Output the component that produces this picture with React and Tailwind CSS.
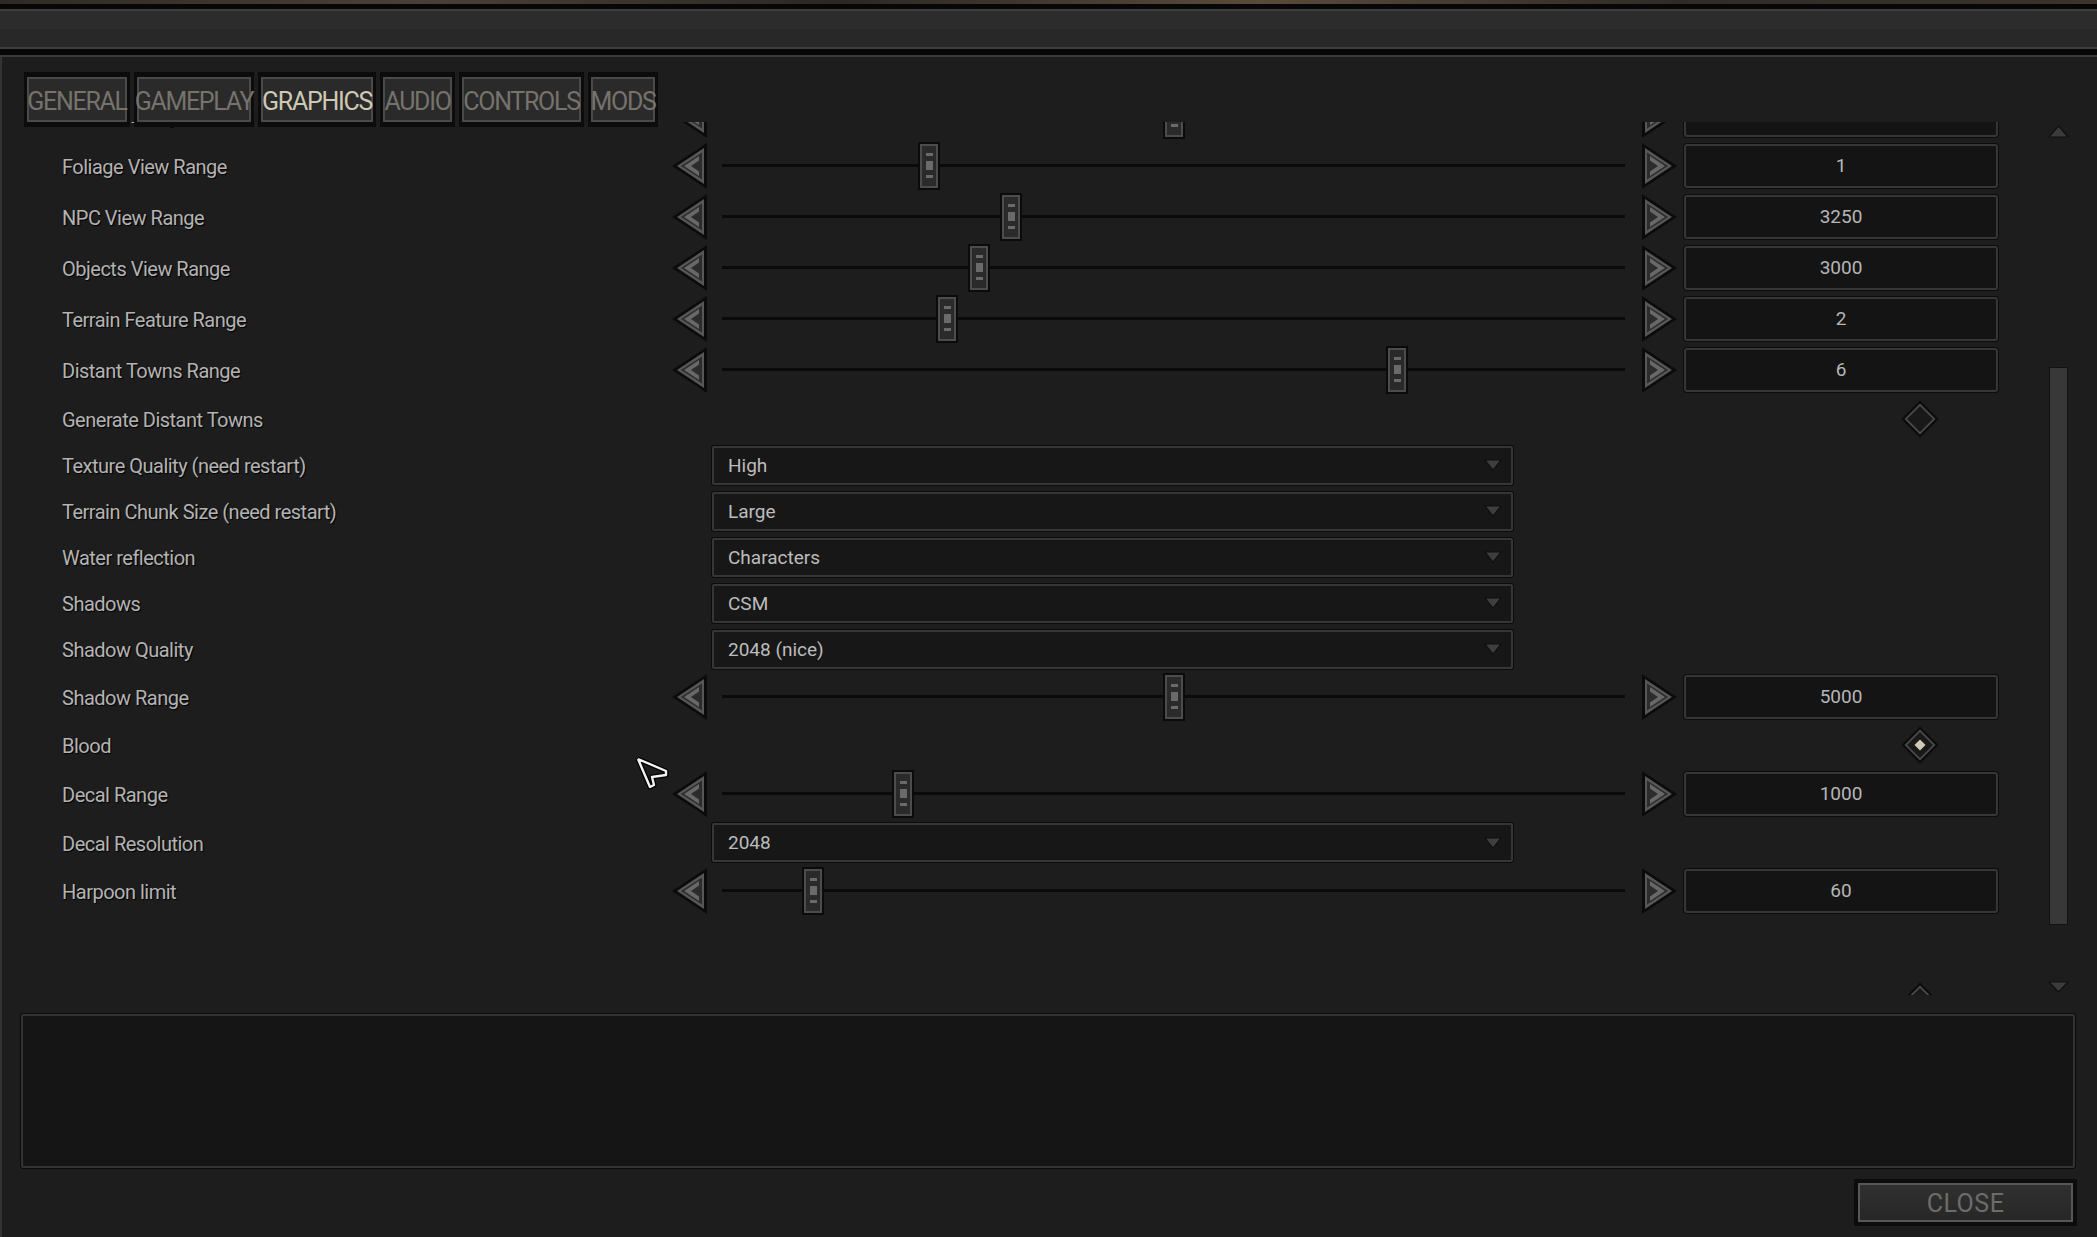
import React from 'react';

const font = { fontFamily: 'Roboto, "Liberation Sans", sans-serif' };

const tabs = [
    { name: 'GENERAL', w: 'w-[106px]' },
    { name: 'GAMEPLAY', w: 'w-[120px]' },
    { name: 'GRAPHICS', w: 'w-[118px]', active: true },
    { name: 'AUDIO', w: 'w-[75px]' },
    { name: 'CONTROLS', w: 'w-[125px]' },
    { name: 'MODS', w: 'w-[70px]' },
];

const rows = [
    { type: 'slider', label: 'Grass Density', value: '2', pos: 0.5, h: 'h-[51px]' },
    { type: 'slider', label: 'Foliage View Range', value: '1', pos: 0.222, h: 'h-[51px]' },
    { type: 'slider', label: 'NPC View Range', value: '3250', pos: 0.316, h: 'h-[51px]' },
    { type: 'slider', label: 'Objects View Range', value: '3000', pos: 0.279, h: 'h-[51px]' },
    { type: 'slider', label: 'Terrain Feature Range', value: '2', pos: 0.243, h: 'h-[51px]' },
    { type: 'slider', label: 'Distant Towns Range', value: '6', pos: 0.754, h: 'h-[51px]' },
    { type: 'check', label: 'Generate Distant Towns', checked: false, h: 'h-[47px]' },
    { type: 'select', label: 'Texture Quality (need restart)', value: 'High', h: 'h-[46px]' },
    { type: 'select', label: 'Terrain Chunk Size (need restart)', value: 'Large', h: 'h-[46px]' },
    { type: 'select', label: 'Water reflection', value: 'Characters', h: 'h-[46px]' },
    { type: 'select', label: 'Shadows', value: 'CSM', h: 'h-[46px]' },
    { type: 'select', label: 'Shadow Quality', value: '2048 (nice)', h: 'h-[46px]' },
    { type: 'slider', label: 'Shadow Range', value: '5000', pos: 0.5, h: 'h-[49px]' },
    { type: 'check', label: 'Blood', checked: true, h: 'h-[47px]' },
    { type: 'slider', label: 'Decal Range', value: '1000', pos: 0.193, h: 'h-[51px]' },
    { type: 'select', label: 'Decal Resolution', value: '2048', h: 'h-[47px]' },
    { type: 'slider', label: 'Harpoon limit', value: '60', pos: 0.091, h: 'h-[49px]' },
    { type: 'spacer', h: 'h-[62px]' },
    { type: 'check', label: '', checked: false, h: 'h-[47px]' },
];

function ArrowLeft() {
    return (
        <svg width="35" height="46" viewBox="0 0 35 46" className="shrink-0">
            <polygon points="0,23 35,0 35,46" fill="#0b0b0b" />
            <polygon points="5,23 32,5 32,41" fill="#575757" />
            <polygon points="9,23 30,9.5 30,36.5" fill="#2c2c2c" />
            <polygon points="27,13 12,23 27,33 27,28.5 19,23 27,17.5" fill="#686868" />
        </svg>
    );
}

function ArrowRight() {
    return (
        <svg width="35" height="46" viewBox="0 0 35 46" className="shrink-0">
            <polygon points="35,23 0,0 0,46" fill="#0b0b0b" />
            <polygon points="30,23 3,5 3,41" fill="#575757" />
            <polygon points="26,23 5,9.5 5,36.5" fill="#2c2c2c" />
            <polygon points="8,13 23,23 8,33 8,28.5 16,23 8,17.5" fill="#686868" />
        </svg>
    );
}

function Diamond({ checked }) {
    return (
        <svg width="38" height="38" viewBox="0 0 38 38" className="shrink-0">
            <polygon points="19,0.5 37.5,19 19,37.5 0.5,19" fill="#0b0b0b" />
            <polygon points="19,3.5 34.5,19 19,34.5 3.5,19" fill="#4b4b4b" />
            <polygon points="19,6 32,19 19,32 6,19" fill="#191919" />
            {checked && <polygon points="19,13.5 24.5,19 19,24.5 13.5,19" fill="#cfcbb2" />}
        </svg>
    );
}

function Slider({ value, pos }) {
    return (
        <div className="flex items-center">
            <ArrowLeft />
            <div className="relative ml-[15px] h-[3px] w-[903px] bg-[#0a0a0a]">
                <div
                    className="absolute top-1/2 h-[48px] w-[22px] -translate-y-1/2 bg-[#0b0b0b] p-[2px]"
                    style={{ left: Math.round(pos * 881) }}
                >
                    <div className="flex h-full flex-col items-center justify-center gap-[5px] border-2 border-[#4c4c4c] bg-[#2a2a2a]">
                        <div className="h-[3px] w-[7px] bg-[#6a6a6a]" />
                        <div className="h-[9px] w-[7px] bg-[#6a6a6a]" />
                        <div className="h-[3px] w-[7px] bg-[#6a6a6a]" />
                    </div>
                </div>
            </div>
            <div className="ml-[17px]">
                <ArrowRight />
            </div>
            <div className="ml-[7px] flex h-[44px] w-[314px] items-center justify-center rounded-[3px] border-2 border-[#363636] bg-[#141414] pt-[2px] text-[19px] text-[#b6b6b6] shadow-[0_0_0_1px_#0c0c0c]">
                {value}
            </div>
        </div>
    );
}

function Select({ value }) {
    return (
        <div className="ml-[40px] flex h-[39px] w-[801px] items-center justify-between rounded-[2px] border-2 border-[#363636] bg-[#171717] pl-[14px] pr-[9px] text-[19px] text-[#bcbcbc] shadow-[0_0_0_1px_#0c0c0c]">
            <span className="pt-[2px]">{value}</span>
            <svg width="18" height="12" viewBox="0 0 18 12">
                <polygon points="1,1 17,1 9,11" fill="#3e3e3e" stroke="#0e0e0e" strokeWidth="1.2" strokeLinejoin="round" />
            </svg>
        </div>
    );
}

function Row({ row }) {
    if (row.type === 'spacer') return <div className={row.h} />;
    return (
        <div className={`flex items-center ${row.h}`}>
            <div className="w-[670px] shrink-0 pl-[60px] pt-[2px] text-[20px] tracking-[-0.5px] text-[#b3b3b3] [text-shadow:1px_1px_1px_#000]">
                {row.label}
            </div>
            {row.type === 'slider' && <Slider value={row.value} pos={row.pos} />}
            {row.type === 'select' && <Select value={row.value} />}
            {row.type === 'check' && (
                <div className="flex w-[1326px] justify-end pr-[59px]">
                    <Diamond checked={row.checked} />
                </div>
            )}
        </div>
    );
}

export default function App() {
    return (
        <div className="relative flex h-[1237px] w-[2097px] flex-col overflow-hidden bg-[#1d1d1d]" style={font}>
            {/* backdrop strip + header */}
            <div className="h-[4px] bg-[linear-gradient(90deg,#2e2a25,#4a4036_20%,#2b2825_40%,#5a4a3a_60%,#2f2b27_80%,#3a342c)]" />
            <div className="h-[5px] bg-[#070707]" />
            <div className="flex h-[40px] flex-col border-y-2 border-[#3d3d3d]">
                <div className="flex-1 bg-[#2c2c2c]" />
                <div className="flex-1 bg-[#282828]" />
            </div>
            <div className="h-[6px] bg-[#070707]" />
            <div className="h-[2px] bg-[#3a3a3a]" />

            {/* settings panel */}
            <div className="relative flex flex-1 flex-col border-l-2 border-[#333333]">
                <div className="absolute left-[22px] top-[15px] z-10 flex gap-[4px]">
                    {tabs.map((t) => (
                        <div key={t.name} className={`h-[55px] ${t.w} bg-[#0c0c0c] px-[3px] py-[5px]`}>
                            <div className="flex h-full items-center justify-center border-2 border-[#4a4a4a] bg-[#2a2a2a] pt-[3px]">
                                <span
                                    className={`whitespace-nowrap text-[25px] leading-none tracking-[-1.3px] ${t.active ? 'text-[#cdc9b3]' : 'text-[#76726c]'}`}
                                >
                                    {t.name}
                                </span>
                            </div>
                        </div>
                    ))}
                </div>

                <div className="h-[65px] shrink-0" />

                <div className="flex h-[873px] shrink-0">
                    <div className="w-[2046px] shrink-0 overflow-hidden">
                        <div className="-mt-[33px]">
                            {rows.map((row, i) => (
                                <Row key={i} row={row} />
                            ))}
                        </div>
                    </div>
                    {/* scrollbar */}
                    <div className="flex w-[21px] flex-col items-center">
                        <svg width="21" height="13" viewBox="0 0 21 13" className="mt-[3px]">
                            <polygon points="10.5,1 20,12 1,12" fill="#3b3b3b" stroke="#101010" strokeWidth="1.2" strokeLinejoin="round" />
                        </svg>
                        <div className="mt-[229px] h-[558px] w-[19px] border border-[#111111] bg-[#383838]" />
                        <svg width="21" height="12" viewBox="0 0 21 12" className="mt-[56px]">
                            <polygon points="1,1 20,1 10.5,11" fill="#3b3b3b" stroke="#101010" strokeWidth="1.2" strokeLinejoin="round" />
                        </svg>
                    </div>
                </div>

                {/* description box */}
                <div className="ml-[19px] mt-[19px] h-[154px] w-[2054px] rounded-[2px] border-2 border-[#333333] bg-[#151515] shadow-[0_0_0_1px_#0b0b0b]" />

                {/* footer */}
                <div className="mt-[11px] flex justify-end pr-[20px]">
                    <div className="h-[47px] w-[223px] bg-[#0c0c0c] p-[4px]">
                        <div className="flex h-full items-center justify-center border-2 border-[#575757] bg-[linear-gradient(180deg,#303030,#272727)] pt-[2px] text-[25px] tracking-[0.5px] text-[#6e6c68]">
                            CLOSE
                        </div>
                    </div>
                </div>
            </div>

            {/* mouse cursor */}
            <svg width="34" height="34" viewBox="0 0 34 34" className="absolute left-[636px] top-[757px]">
                <polyline points="2,2 14,30 18,28 16,20 30,18 30,14 2,2" fill="none" stroke="#000" strokeWidth="5" strokeLinejoin="round" />
                <polyline points="2,2 14,30 18,28 16,20 30,18 30,14 2,2" fill="none" stroke="#f2f2f2" strokeWidth="2.4" strokeLinejoin="round" />
            </svg>
        </div>
    );
}
